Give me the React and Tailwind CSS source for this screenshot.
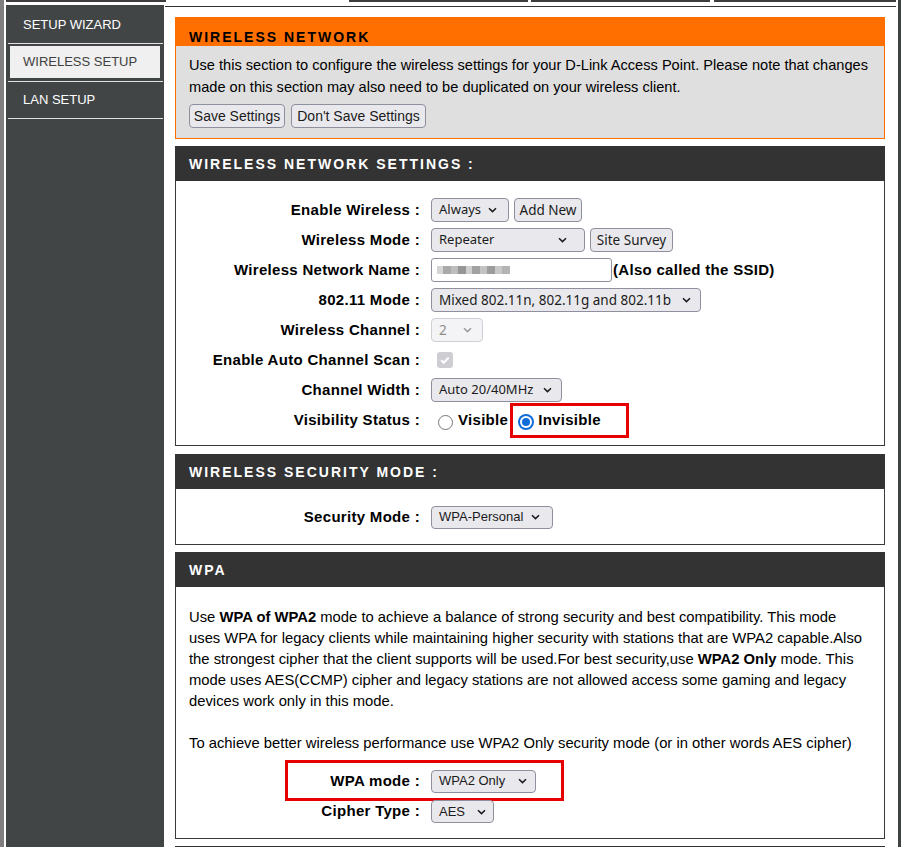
import React from "react";

const sans = "font-['Liberation_Sans',Arial,sans-serif]";
const ui = "font-['Noto_Sans','Liberation_Sans',sans-serif]";

function Chevron({ muted }) {
  return (
    <svg width="9" height="6" viewBox="0 0 9 6" fill="none" className="shrink-0">
      <path d="M1 1.2L4.5 4.6L8 1.2" stroke={muted ? "#9a9aa0" : "#1b1b1b"} strokeWidth="1.5" />
    </svg>
  );
}

function Select({ children, className, disabled }) {
  return (
    <div
      className={`flex items-center justify-between rounded-[4px] border pl-[7px] ${
        disabled ? "border-[#cfcfd6] bg-[#f4f4f6] text-[#8d8d8d]" : "border-[#8f8f9d] bg-[#e9e9ed] text-[#1b1b1b]"
      } ${className}`}
    >
      <span className="whitespace-nowrap">{children}</span>
      <Chevron muted={disabled} />
    </div>
  );
}

function Button({ children, className }) {
  return (
    <button
      className={`flex items-center justify-center whitespace-nowrap rounded-[4px] border border-[#8f8f9d] bg-[#e9e9ed] text-[#1b1b1b] ${className}`}
    >
      {children}
    </button>
  );
}

function Row({ label, children, className = "h-[30px]" }) {
  return (
    <div className={`relative grid grid-cols-[244px_1fr] items-center gap-x-[11px] ${className}`}>
      <div className="whitespace-nowrap text-right text-[15px] font-bold tracking-[0.3px]">{label}&nbsp;:</div>
      <div className="flex items-center">{children}</div>
    </div>
  );
}

function SectionHead({ children }) {
  return (
    <div className="flex h-[35px] items-center bg-[#333333] pl-[14px] pt-[1px] text-[14px] font-bold tracking-[2px] text-white">
      {children}
    </div>
  );
}

const blur = [
  [6, "#d4d4d4"],
  [8, "#a9a9a9"],
  [7, "#bdbdbd"],
  [8, "#959595"],
  [6, "#cfcfcf"],
  [8, "#a1a1a1"],
  [7, "#c2c2c2"],
  [8, "#9c9c9c"],
  [7, "#c8c8c8"],
  [8, "#b4b4b4"],
];

const blurCls = {
  6: "w-[6px]",
  7: "w-[7px]",
  8: "w-[8px]",
};

export default function App() {
  return (
    <div className={`flex min-h-[847px] bg-white text-black ${sans}`}>
      <div className="w-[4px] shrink-0 bg-[#7f7f7f]" />
      <div className="w-[2px] shrink-0" />

      <div className="flex w-[890px] shrink-0 flex-col">
        {/* top nav, only its lower edge shows */}
        <div className="flex h-[2px]">
          <div className="w-[160px] bg-[#3d3d3d]" />
          <div className="w-[183px]" />
          <div className="w-[179px] bg-[#3d3d3d]" />
          <div className="w-[3px]" />
          <div className="w-[179px] bg-[#3d3d3d]" />
          <div className="w-[4px]" />
          <div className="flex-1 bg-[#3d3d3d]" />
        </div>

        <div className="mt-[3px] flex flex-1">
          <aside className="w-[158px] shrink-0 bg-[#414546] pt-[1px] text-[13px]">
            <div className="ml-[2px] mr-[1px] flex h-[38px] items-center border-b border-[#e0e0e0] pl-[15px] text-white">
              SETUP WIZARD
            </div>
            <div className="ml-[2px] mr-[1px] h-[38px] border-b border-[#e0e0e0] pb-[3px] pl-[2px] pr-[3px] pt-[2px]">
              <div className="flex h-full items-center bg-[#f0f0f0] pl-[13px] text-[#404040]">WIRELESS SETUP</div>
            </div>
            <div className="ml-[2px] mr-[1px] flex h-[37px] items-center border-b border-[#e0e0e0] pl-[15px] text-white">
              LAN SETUP
            </div>
          </aside>

          <main className="flex-1 pl-[1px] pt-[1px]">
            <div className="border-t border-[#333333] pl-[10px] pr-[11px] pt-[10px]">
              {/* intro */}
              <div className="h-[29px] bg-[#ff6f00] pl-[14px] pt-[12px] text-[14px] font-bold leading-[16px] tracking-[2px]">
                WIRELESS NETWORK
              </div>
              <div className="border border-t-0 border-[#ff6f00] bg-[#dfdfdf] px-[13px] pb-[10px] pt-[8px]">
                <p className="whitespace-nowrap text-[14.6px] leading-[22px]">
                  Use this section to configure the wireless settings for your D-Link Access Point. Please note that changes
                  <br />
                  made on this section may also need to be duplicated on your wireless client.
                </p>
                <div className="mt-[6px] flex gap-[6px] text-[14px]">
                  <Button className="h-[24px] w-[96px]">Save Settings</Button>
                  <Button className="h-[24px] w-[135px]">Don't Save Settings</Button>
                </div>
              </div>

              {/* wireless network settings */}
              <div className="mt-[7px]">
                <SectionHead>WIRELESS NETWORK SETTINGS :</SectionHead>
                <div className="border border-t-0 border-[#3a3a3a] pb-[10px] pt-[14px]">
                  <Row label="Enable Wireless">
                    <Select className={`h-[24px] w-[78px] pr-[11px] text-[13px] ${ui}`}>Always</Select>
                    <Button className={`ml-[5px] h-[24px] w-[68px] text-[13.5px] ${ui}`}>Add New</Button>
                  </Row>
                  <Row label="Wireless Mode">
                    <Select className={`h-[24px] w-[154px] pr-[17px] text-[13px] ${ui}`}>Repeater</Select>
                    <Button className={`ml-[5px] h-[24px] w-[83px] text-[13.5px] ${ui}`}>Site Survey</Button>
                  </Row>
                  <Row label="Wireless Network Name">
                    <div className="flex h-[24px] w-[181px] items-center rounded-[3px] border border-[#8f8f9d] bg-white pl-[5px]">
                      {blur.map(([w, c], i) => (
                        <div key={i} className={`h-[8px] ${blurCls[w]}`} style={{ backgroundColor: c }} />
                      ))}
                    </div>
                    <span className="ml-[1px] whitespace-nowrap text-[15px] font-bold tracking-[0.3px]">(Also called the SSID)</span>
                  </Row>
                  <Row label="802.11 Mode">
                    <Select className={`h-[24px] w-[270px] pr-[9px] text-[13.5px] ${ui}`}>
                      Mixed 802.11n, 802.11g and 802.11b
                    </Select>
                  </Row>
                  <Row label="Wireless Channel">
                    <Select disabled className={`h-[24px] w-[52px] pr-[10px] text-[13.5px] ${ui}`}>
                      2
                    </Select>
                  </Row>
                  <Row label="Enable Auto Channel Scan">
                    <div className="ml-[6px] flex h-[16px] w-[16px] items-center justify-center rounded-[3px] bg-[#cdcdd2]">
                      <svg width="12" height="12" viewBox="0 0 12 12" fill="none">
                        <path d="M2.2 6.3l2.5 2.5 5-5.2" stroke="#ffffff" strokeWidth="2" />
                      </svg>
                    </div>
                  </Row>
                  <Row label="Channel Width">
                    <Select className={`h-[24px] w-[131px] pr-[9px] text-[13px] ${ui}`}>Auto 20/40MHz</Select>
                  </Row>
                  <Row label="Visibility Status">
                    <div className="ml-[7px] mt-[4px] h-[15px] w-[15px] rounded-full border border-[#767676] bg-white" />
                    <span className="ml-[5px] text-[15px] font-bold tracking-[0.3px]">Visible</span>
                    <span className="relative ml-[10px] flex h-[30px] items-center">
                      <span className="mt-[3px] flex h-[16px] w-[16px] items-center justify-center rounded-full bg-[#0f6cd8]">
                        <span className="flex h-[12px] w-[12px] items-center justify-center rounded-full bg-white">
                          <span className="h-[8px] w-[8px] rounded-full bg-[#0f6cd8]" />
                        </span>
                      </span>
                      <span className="ml-[4px] text-[15px] font-bold tracking-[0.3px]">Invisible</span>
                      <span className="absolute -bottom-[3px] -left-[8px] -right-[28px] -top-[2px] border-[3px] border-[#e60000]" />
                    </span>
                  </Row>
                </div>
              </div>

              {/* security mode */}
              <div className="mt-[8px]">
                <SectionHead>WIRELESS SECURITY MODE :</SectionHead>
                <div className="border border-t-0 border-[#3a3a3a] pb-[12px] pt-[13px]">
                  <Row label="Security Mode">
                    <Select className="h-[23px] w-[122px] pr-[12px] text-[13px]">WPA-Personal</Select>
                  </Row>
                </div>
              </div>

              {/* wpa */}
              <div className="mt-[7px]">
                <SectionHead>WPA</SectionHead>
                <div className="border border-t-0 border-[#3a3a3a] pb-[11px] pt-[20px]">
                  <p className="whitespace-nowrap px-[13px] text-[14.8px] leading-[21px]">
                    Use <b>WPA of WPA2</b> mode to achieve a balance of strong security and best compatibility. This mode
                    <br />
                    uses WPA for legacy clients while maintaining higher security with stations that are WPA2 capable.Also
                    <br />
                    the strongest cipher that the client supports will be used.For best security,use <b>WPA2 Only</b> mode. This
                    <br />
                    mode uses AES(CCMP) cipher and legacy stations are not allowed access some gaming and legacy
                    <br />
                    devices work only in this mode.
                    <br />
                    <br />
                    To achieve better wireless performance use WPA2 Only security mode (or in other words AES cipher)
                  </p>
                  <Row label="WPA mode" className="mt-[12px] h-[30px]">
                    <Select className="h-[23px] w-[105px] pr-[8px] text-[13px]">WPA2 Only</Select>
                    <span className="absolute left-[109px] top-[-6px] h-[41px] w-[279px] border-[3px] border-[#e60000]" />
                  </Row>
                  <Row label="Cipher Type" className="h-[31px]">
                    <Select className="h-[23px] w-[63px] pr-[7px] text-[13px]">AES</Select>
                  </Row>
                </div>
              </div>

              {/* next section, only its top edge is in view */}
              <div className="mt-[7px] h-[35px] bg-[#333333]" />
            </div>
          </main>
        </div>
      </div>

      <div className="w-[2px] shrink-0" />
      <div className="w-[3px] shrink-0 bg-[#3f4242]" />
    </div>
  );
}
